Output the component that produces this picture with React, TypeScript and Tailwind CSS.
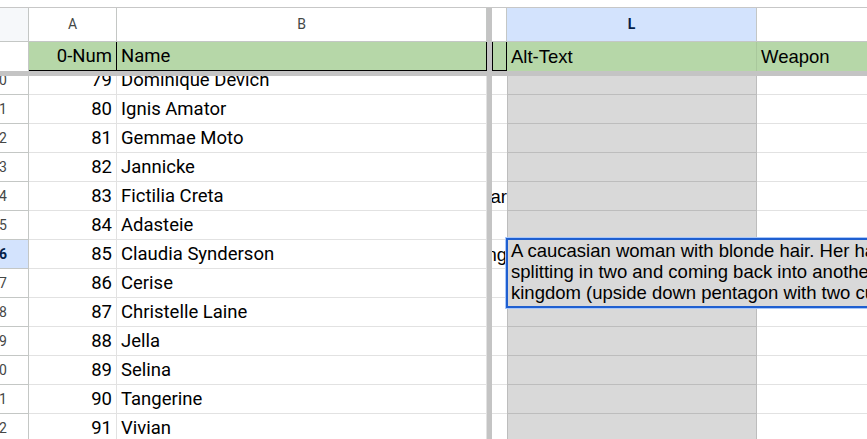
import React from "react";

const rows: { num: number; name: string; over?: string }[] = [
  { num: 79, name: "Dominique Devich" },
  { num: 80, name: "Ignis Amator" },
  { num: 81, name: "Gemmae Moto" },
  { num: 82, name: "Jannicke" },
  { num: 83, name: "Fictilia Creta", over: "Lunar" },
  { num: 84, name: "Adasteie" },
  { num: 85, name: "Claudia Synderson", over: "Wing" },
  { num: 86, name: "Cerise" },
  { num: 87, name: "Christelle Laine" },
  { num: 88, name: "Jella" },
  { num: 89, name: "Selina" },
  { num: 90, name: "Tangerine" },
  { num: 91, name: "Vivian" },
];

const SELECTED = 85;

export default function App() {
  return (
    <div className="w-[867px] h-[439px] overflow-hidden bg-white flex flex-col font-['Roboto',sans-serif] text-[#1f1f1f]">
      {/* top strip */}
      <div className="h-[8px] shrink-0 border-b border-[#c7c7c7] bg-white" />

      {/* column letters */}
      <div className="h-[34px] shrink-0 flex border-b border-[#c4c7c5] text-[14px] text-[#444746]">
        <div className="w-[29px] shrink-0 bg-[#f6f8fa] border-r border-[#c4c7c5]" />
        <div className="w-[88px] shrink-0 border-r border-[#c4c7c5] flex items-center justify-center">A</div>
        <div className="w-[370px] shrink-0 border-r border-[#c4c7c5] flex items-center justify-center">B</div>
        <div className="w-[5px] shrink-0 bg-[#c4c4c4]" />
        <div className="w-[15px] shrink-0 border-r border-[#c4c7c5]" />
        <div className="w-[250px] shrink-0 bg-[#d3e3fd] border-r border-[#c4c7c5] flex items-center justify-center font-bold text-[#041e49]">
          L
        </div>
        <div className="flex-1" />
      </div>

      {/* green header row */}
      <div className="h-[29px] shrink-0 flex text-[18.5px] text-black">
        <div className="w-[29px] shrink-0 bg-white border-r border-[#c4c7c5]" />
        <div className="w-[88px] shrink-0 bg-[#b6d7a8] border-r border-b border-black flex items-center justify-end pr-[4px] pt-[2px]">
          0-Num
        </div>
        <div className="w-[370px] shrink-0 bg-[#b6d7a8] border-r border-b border-black flex items-center pl-[4px] pt-[2px]">
          Name
        </div>
        <div className="w-[5px] shrink-0 bg-[#c4c4c4]" />
        <div className="w-[15px] shrink-0 bg-[#b6d7a8] border-l border-r border-b border-black" />
        <div className="w-[250px] shrink-0 bg-[#b6d7a8] border-r border-[#a9c89c] flex items-center pl-[4px] pt-[1px] font-['Liberation_Sans',Arial,sans-serif]">
          Alt-Text
        </div>
        <div className="flex-1 bg-[#b6d7a8] flex items-center pl-[4px] pt-[1px] font-['Liberation_Sans',Arial,sans-serif]">
          Weapon
        </div>
      </div>

      {/* horizontal freeze bar */}
      <div className="h-[5px] shrink-0 bg-[#c4c4c4]" />

      {/* data */}
      <div className="flex-1 overflow-hidden">
        <div className="-mt-[10px]">
          {rows.map((r) => {
            const sel = r.num === SELECTED;
            return (
              <div key={r.num} className="h-[29px] flex text-[18.5px]">
                <div
                  className={
                    sel
                      ? "w-[29px] shrink-0 overflow-hidden flex items-center justify-end pr-[21px] bg-[#d3e3fd] border-r border-b border-[#c4c7c5] text-[14px] font-bold text-[#041e49]"
                      : "w-[29px] shrink-0 overflow-hidden flex items-center justify-end pr-[21px] bg-white border-r border-b border-[#c4c7c5] text-[14px] text-[#444746]"
                  }
                >
                  <span className="whitespace-nowrap">{r.num + 1}</span>
                </div>
                <div className="w-[88px] shrink-0 border-r border-b border-[#e2e2e2] flex items-center justify-end pr-[4px] pt-[2px] text-black">
                  {r.num}
                </div>
                <div className="w-[370px] shrink-0 border-r border-b border-[#e2e2e2] flex items-center pl-[4px] pt-[2px] text-black whitespace-nowrap">
                  {r.name}
                </div>
                <div className="w-[5px] shrink-0 bg-[#c4c4c4]" />
                <div className="w-[15px] shrink-0 border-b border-[#e2e2e2] overflow-hidden flex items-center justify-end pt-[1px] text-black font-['Liberation_Sans',Arial,sans-serif]">
                  {r.over ? <span className="whitespace-nowrap">{r.over}</span> : null}
                </div>
                <div className="w-[250px] shrink-0 bg-[#d9d9d9] border-l border-r border-b border-[#bdbdbd] relative">
                  {sel ? (
                    <div className="absolute left-[-2px] top-[-2px] w-[420px] h-[70px] z-10 bg-[#d9d9d9] border-2 border-[#1f5fd0] ring-1 ring-[#a8c7fa] pl-[3px] text-[18.5px] leading-[21px] text-black font-['Liberation_Sans',Arial,sans-serif] whitespace-nowrap overflow-hidden">
                      <div>A caucasian woman with blonde hair. Her hair is long and</div>
                      <div>splitting in two and coming back into another braid</div>
                      <div>kingdom (upside down pentagon with two curves)</div>
                    </div>
                  ) : null}
                </div>
                <div className="flex-1 border-b border-[#e2e2e2]" />
              </div>
            );
          })}
        </div>
      </div>
    </div>
  );
}
